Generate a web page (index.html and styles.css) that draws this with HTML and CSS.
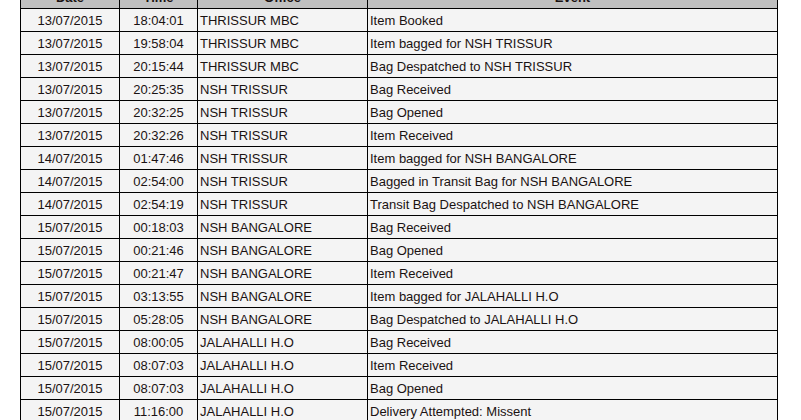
FILE: index.html
```html
<!DOCTYPE html>
<html>
<head>
<meta charset="utf-8">
<link rel="stylesheet" href="styles.css">
</head>
<body>
<table class="track">
<colgroup>
<col class="c-date"><col class="c-time"><col class="c-office"><col class="c-event">
</colgroup>
<thead>
<tr><th>Date</th><th>Time</th><th>Office</th><th>Event</th></tr>
</thead>
<tbody>
<tr><td class="ctr">13/07/2015</td><td class="ctr">18:04:01</td><td>THRISSUR MBC</td><td>Item Booked</td></tr>
<tr><td class="ctr">13/07/2015</td><td class="ctr">19:58:04</td><td>THRISSUR MBC</td><td>Item bagged for NSH TRISSUR</td></tr>
<tr><td class="ctr">13/07/2015</td><td class="ctr">20:15:44</td><td>THRISSUR MBC</td><td>Bag Despatched to NSH TRISSUR</td></tr>
<tr><td class="ctr">13/07/2015</td><td class="ctr">20:25:35</td><td>NSH TRISSUR</td><td>Bag Received</td></tr>
<tr><td class="ctr">13/07/2015</td><td class="ctr">20:32:25</td><td>NSH TRISSUR</td><td>Bag Opened</td></tr>
<tr><td class="ctr">13/07/2015</td><td class="ctr">20:32:26</td><td>NSH TRISSUR</td><td>Item Received</td></tr>
<tr><td class="ctr">14/07/2015</td><td class="ctr">01:47:46</td><td>NSH TRISSUR</td><td>Item bagged for NSH BANGALORE</td></tr>
<tr><td class="ctr">14/07/2015</td><td class="ctr">02:54:00</td><td>NSH TRISSUR</td><td>Bagged in Transit Bag for NSH BANGALORE</td></tr>
<tr><td class="ctr">14/07/2015</td><td class="ctr">02:54:19</td><td>NSH TRISSUR</td><td>Transit Bag Despatched to NSH BANGALORE</td></tr>
<tr><td class="ctr">15/07/2015</td><td class="ctr">00:18:03</td><td>NSH BANGALORE</td><td>Bag Received</td></tr>
<tr><td class="ctr">15/07/2015</td><td class="ctr">00:21:46</td><td>NSH BANGALORE</td><td>Bag Opened</td></tr>
<tr><td class="ctr">15/07/2015</td><td class="ctr">00:21:47</td><td>NSH BANGALORE</td><td>Item Received</td></tr>
<tr><td class="ctr">15/07/2015</td><td class="ctr">03:13:55</td><td>NSH BANGALORE</td><td>Item bagged for JALAHALLI H.O</td></tr>
<tr><td class="ctr">15/07/2015</td><td class="ctr">05:28:05</td><td>NSH BANGALORE</td><td>Bag Despatched to JALAHALLI H.O</td></tr>
<tr><td class="ctr">15/07/2015</td><td class="ctr">08:00:05</td><td>JALAHALLI H.O</td><td>Bag Received</td></tr>
<tr><td class="ctr">15/07/2015</td><td class="ctr">08:07:03</td><td>JALAHALLI H.O</td><td>Item Received</td></tr>
<tr><td class="ctr">15/07/2015</td><td class="ctr">08:07:03</td><td>JALAHALLI H.O</td><td>Bag Opened</td></tr>
<tr><td class="ctr">15/07/2015</td><td class="ctr">11:16:00</td><td>JALAHALLI H.O</td><td>Delivery Attempted: Missent</td></tr>
</tbody>
</table>
</body>
</html>
```
FILE: styles.css
```css
html, body {
  margin: 0;
  padding: 0;
  background: #ffffff;
  overflow: hidden;
}
body {
  font-family: "Liberation Sans", Arial, sans-serif;
  font-size: 13px;
  color: #1a1212;
}
.track {
  border-collapse: collapse;
  table-layout: fixed;
  width: 757px;
  margin: -15px 0 0 20px;
}
.c-date { width: 99px; }
.c-time { width: 78px; }
.c-office { width: 170px; }
.c-event { width: 410px; }
.track th,
.track td {
  border: 1px solid #000;
  height: 22px;
  padding: 0 2px;
  white-space: nowrap;
  vertical-align: middle;
  line-height: 15px;
}
.track th {
  background: #c0c0c0;
  font-weight: bold;
  text-align: center;
}
.track td {
  background: #f4f4f4;
  text-align: left;
}
.track td.ctr {
  text-align: center;
}
```
